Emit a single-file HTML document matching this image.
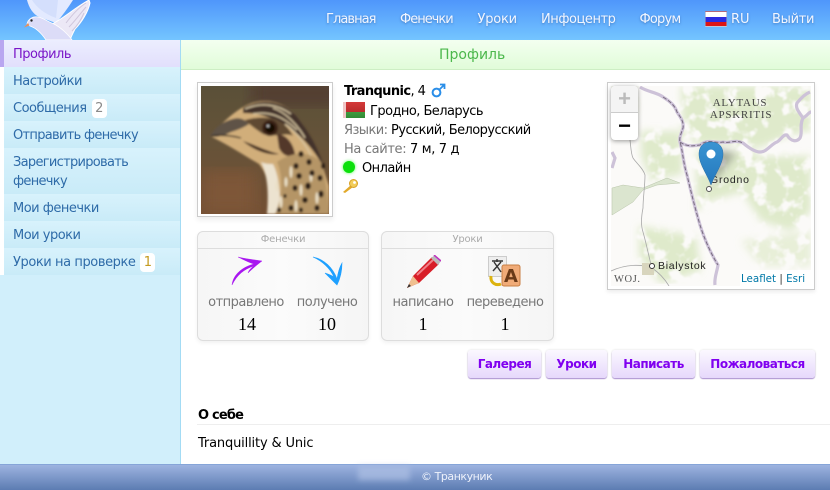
<!DOCTYPE html>
<html><head><meta charset="utf-8"><style>
*{box-sizing:border-box}
html,body{margin:0;padding:0}
body{width:830px;height:490px;position:relative;overflow:hidden;background:#fff;font:13px "DejaVu Sans",sans-serif;color:#000}
.a{position:absolute;white-space:nowrap;line-height:16px;letter-spacing:-.55px}
#hd{position:absolute;left:0;top:0;width:830px;height:40px;background:linear-gradient(#4f96fb,#74c5ff)}
.n{position:absolute;top:12px;color:#f2f6ff;line-height:16px;white-space:nowrap;text-shadow:0 1px 2px rgba(40,80,150,.5)}
#sb{position:absolute;left:0;top:40px;width:181px;height:424px;background:#d1effb;border-right:1px solid #a3dbf4}
.m{position:absolute;left:4px;width:176px;background:linear-gradient(#d8f2fc,#c9ebf8);color:#2e6ba8;padding:5px 9px;line-height:19px;letter-spacing:-.5px;white-space:nowrap}
.bd{display:inline-block;background:#fff;border-radius:4px;padding:0 3.5px;margin-left:1.500px;color:#8a8a8a;line-height:19px;letter-spacing:0}
.box{position:absolute;top:231px;height:110px;border:1px solid #ddd;border-radius:6px;background:linear-gradient(90deg,#f6f6f6,#fbfbfb 50%,#f5f5f5);box-shadow:0 2px 4px rgba(0,0,0,.06)}
.bt{position:absolute;left:0;right:0;top:0;height:17px;border-bottom:1px solid #ddd;text-align:center;font-size:10px;line-height:16px;color:#aaa;letter-spacing:-.2px}
.l{color:#777;position:absolute;text-align:center;white-space:nowrap;line-height:16px;letter-spacing:-.5px}
.v{position:absolute;text-align:center;font:18px "Liberation Serif",serif;line-height:18px;color:#000}
.b{position:absolute;top:350px;height:28px;border-radius:3px;background:linear-gradient(#fbf8ff,#e6d8fb);box-shadow:0 1px 1px #a98fd0,0 0 2px #ddd;color:#8000f0;font-weight:bold;font-size:12px;text-align:center;line-height:28px;letter-spacing:-.5px}
</style></head><body>
<div id="hd"></div>
<svg style="position:absolute;left:20px;top:0" width="80" height="40" viewBox="0 0 80 40">
<path d="M7 0 C9 8 13 14 19 17 L36 23 C42 16 48 8 53 0Z" fill="#e3eaff"/>
<path d="M12 0 C17 8 25 14 36 18 L38 0Z" fill="#cfdcfb" opacity=".8"/>
<path d="M30 25 C42 20 54 8 69 0 L70 3 C68 12 62 22 55 29 C53 33 51 37 50 40 L40 40Z" fill="#ece8f6" stroke="#fff" stroke-width="1"/>
<path d="M46 23 C52 15 58 8 66 3 M49 27 C55 21 60 14 66 7 M52 31 C57 26 61 20 64 13" stroke="#cfc6dc" fill="none"/>
<path d="M7 24 C8 19 13 16 18 17 C24 18 28 22 34 24 C40 27 48 34 52 40 L26 40 C22 34 16 28 10 26Z" fill="#dcdcf7" stroke="#fff" stroke-width=".8"/>
<path d="M4 27.500 L8 23 L9.500 25.500Z" fill="#e8915c"/><circle cx="11.500" cy="20.500" r="1.200" fill="#222"/>
</svg>
<div class="n" style="left:326px;letter-spacing:-.95px">Главная</div>
<div class="n" style="left:400px;letter-spacing:-1px">Фенечки</div>
<div class="n" style="left:477.500px;letter-spacing:-.2px">Уроки</div>
<div class="n" style="left:541px;letter-spacing:-.45px">Инфоцентр</div>
<div class="n" style="left:639.500px;letter-spacing:-.8px">Форум</div>
<div style="position:absolute;left:705px;top:11px;width:22px;height:16px;border-radius:1px;background:linear-gradient(#fff 0 5px,#2a2ae0 5px 10px,#dd1414 10px);border:1px solid rgba(150,160,190,.6)"></div>
<div class="n" style="left:731px">RU</div>
<div class="n" style="left:772px;letter-spacing:-.3px">Выйти</div>

<div id="sb"></div>
<div style="position:absolute;left:0;top:40px;width:4px;height:27px;background:#b9a6f0"></div>
<div class="m" style="top:40px;height:27px;background:linear-gradient(#eceeff,#e2dffc);color:#7a16c8">Профиль</div>
<div class="m" style="top:67px;height:27px">Настройки</div>
<div class="m" style="top:94px;height:27px">Сообщения <span class="bd">2</span></div>
<div class="m" style="top:121px;height:27px;letter-spacing:-.7px">Отправить фенечку</div>
<div class="m" style="top:148px;height:46px;letter-spacing:-.7px">Зарегистрировать<br>фенечку</div>
<div class="m" style="top:194px;height:27px">Мои фенечки</div>
<div class="m" style="top:221px;height:27px">Мои уроки</div>
<div class="m" style="top:248px;height:27px;letter-spacing:-.42px">Уроки на проверке <span class="bd" style="color:#c49a1e;margin-left:1px">1</span></div>
<div style="position:absolute;left:0;top:67px;width:4px;height:208px;background:#fff"></div>

<div style="position:absolute;left:181px;top:40px;width:649px;height:30px;background:linear-gradient(#f3fff0,#e1fcd9);border-bottom:1px solid #cdeec4"></div>
<div class="a" style="left:439px;top:47px;color:#4cb84c;font-size:14px;letter-spacing:0">Профиль</div>

<div style="position:absolute;left:197px;top:82px;width:136px;height:135px;border:1px solid #ccc;box-shadow:0 3px 5px rgba(0,0,0,.07)"></div>
<svg style="position:absolute;left:201px;top:86px" width="128" height="128" viewBox="0 0 128 128">
<defs>
<linearGradient id="bg" x1="0" y1="0" x2="0" y2="1"><stop offset="0" stop-color="#5a5038"/><stop offset=".45" stop-color="#665339"/><stop offset="1" stop-color="#734f33"/></linearGradient>
<filter id="bl"><feGaussianBlur stdDeviation="1"/></filter>
<filter id="bl3"><feGaussianBlur stdDeviation="8"/></filter>
</defs>
<rect width="128" height="128" fill="url(#bg)"/>
<rect x="50" y="-6" width="90" height="26" fill="#523d30" filter="url(#bl3)"/>
<rect x="0" y="85" width="55" height="43" fill="#7e5637" filter="url(#bl3)"/>
<g filter="url(#bl)">
<path d="M9 50 C20 38 32 26 46 19 C62 11 86 14 100 36 C114 56 123 84 128 100 L128 128 L66 128 C70 108 68 90 58 78 C44 70 26 58 9 50Z" fill="#d1ae7a"/>
<path d="M42 22 C60 11 86 14 100 36 C110 50 118 64 124 84 C112 60 92 40 72 33 C60 28 50 27 42 27Z" fill="#43332a"/>
<g stroke="#d9c7a3" stroke-width="1.400" fill="none"><path d="M44 23 C60 16 76 18 90 28"/><path d="M52 28 C68 25 82 30 96 44"/><path d="M72 22 C84 26 96 38 104 52"/><path d="M84 38 C96 46 106 60 112 74"/></g>
<path d="M9 50 C14 42 22 35 32 33 C38 31 44 33 48 38 C42 42 36 44 30 46 C22 50 14 52 9 50Z" fill="#5f5247"/>
<path d="M10 50 C22 48 32 50 40 52" stroke="#342b24" stroke-width="1.400" fill="none"/>
<path d="M44 34 C52 32 62 30 74 33 C82 36 88 42 92 50 C84 46 74 52 62 48 C56 44 50 40 44 34Z" fill="#5f4833"/>
<path d="M42 55 C52 58 62 64 78 68 C68 70 52 64 42 55Z" fill="#452f20"/>
<path d="M76 48 C84 48 92 56 94 68 C88 72 82 70 78 62Z" fill="#52392a"/>
<path d="M60 76 C66 88 68 104 66 128 L78 128 C80 108 78 90 72 78 C68 78 64 78 60 76Z" fill="#ece3d0"/>
<path d="M76 76 C90 66 108 64 120 76 C125 92 127 110 128 128 L74 128 C82 110 82 90 76 76Z" fill="#b59566"/>
<g fill="#eadfc6"><ellipse cx="76" cy="100" rx="1.500" ry="6"/><ellipse cx="80" cy="116" rx="1.500" ry="6"/><ellipse cx="90" cy="86" rx="1.500" ry="6"/><ellipse cx="100" cy="104" rx="1.500" ry="6"/><ellipse cx="110" cy="90" rx="1.500" ry="6"/><ellipse cx="116" cy="112" rx="1.500" ry="6"/><ellipse cx="95" cy="120" rx="1.500" ry="6"/><ellipse cx="85" cy="96" rx="1.500" ry="5"/></g>
<g fill="#2a1c12"><ellipse cx="100" cy="68" rx="2.600" ry="3"/><ellipse cx="108" cy="76" rx="2.600" ry="3"/><ellipse cx="95" cy="80" rx="2.600" ry="3"/><ellipse cx="111" cy="87" rx="2.600" ry="3"/><ellipse cx="98" cy="90" rx="2.800" ry="3"/><ellipse cx="107" cy="100" rx="2.800" ry="3.500"/><ellipse cx="94" cy="102" rx="2.500" ry="3"/><ellipse cx="119" cy="92" rx="2.500" ry="3"/><ellipse cx="104" cy="114" rx="2.800" ry="3"/><ellipse cx="120" cy="108" rx="2.600" ry="3.500"/><ellipse cx="90" cy="122" rx="2.600" ry="3"/><ellipse cx="78" cy="124" rx="2" ry="2.500"/><ellipse cx="116" cy="122" rx="2.600" ry="3"/><ellipse cx="84" cy="110" rx="1.600" ry="2"/><ellipse cx="122" cy="80" rx="2" ry="3"/><ellipse cx="100" cy="124" rx="2" ry="2.500"/></g>
<circle cx="69" cy="42" r="8" fill="#3a2416"/><circle cx="69" cy="42" r="5" fill="#160a05"/><circle cx="67" cy="40" r="1.200" fill="#ddd"/>
</g>
</svg>

<div class="a" style="left:344px;top:84px"><b style="letter-spacing:-.6px">Tranqunic</b>, 4</div>
<svg style="position:absolute;left:431px;top:83px" width="15" height="15" viewBox="0 0 15 15"><circle cx="5.500" cy="9.500" r="3.900" fill="none" stroke="#2a8ee8" stroke-width="2"/><path d="M8.500 6.500L13 2M9 1.500h4.500V6" fill="none" stroke="#2a8ee8" stroke-width="1.800"/></svg>
<div style="position:absolute;left:343px;top:102px;width:22px;height:16px;background:linear-gradient(#d43a3a,#b92c2c 10px,#3f9a3f 10px,#2f8a35)"><div style="position:absolute;left:0;top:0;width:3px;height:100%;background:#efc6c6"></div></div>
<div class="a" style="left:370px;top:104px">Гродно, Беларусь</div>
<div class="a" style="left:344px;top:123px;letter-spacing:-.57px"><span style="color:#777">Языки:</span> Русский, Белорусский</div>
<div class="a" style="left:344px;top:142px;letter-spacing:-.35px"><span style="color:#777">На сайте:</span> 7 м, 7 д</div>
<div style="position:absolute;left:343px;top:161px;width:12px;height:12px;border-radius:50%;background:#0be00b;box-shadow:0 0 3px #5f5"></div>
<div class="a" style="left:362px;top:161px">Онлайн</div>
<svg style="position:absolute;left:342px;top:178px" width="18" height="16" viewBox="0 0 18 16"><path d="M1 14L9 7L11 9L3 15Z" fill="#e2a92a"/><circle cx="11.500" cy="5.500" r="4" fill="#f2cd5a" stroke="#d9a228"/><circle cx="12.500" cy="4.500" r="1.400" fill="#fff"/></svg>

<div class="box" style="left:197px;width:172px"><div class="bt">Фенечки</div></div>
<svg style="position:absolute;left:230px;top:255px" width="34" height="32" viewBox="0 0 34 32"><path d="M2 30C3 20 12 12 24 9C20 8 14 5 8 2C16 4 26 5 32 6C28 9 22 14 18 18C19 15 21 13 24 11C14 14 7 20 2 30Z" fill="#a815f0" stroke="#a815f0" stroke-width=".4"/></svg>
<svg style="position:absolute;left:312px;top:255px" width="32" height="36" viewBox="0 0 32 36"><path d="M1 2C12 4 21 13 25 24C26 18 27 13 30 8C30 16 28 24 25 30C21 26 17 22 13 18C16 19 19 20 22 22C18 13 10 6 1 2Z" fill="#1ea0ff" stroke="#1ea0ff" stroke-width=".6"/></svg>
<div class="l" style="left:197px;width:98px;top:295px">отправлено</div>
<div class="l" style="left:290px;width:74px;top:295px">получено</div>
<div class="v" style="left:197px;width:100px;top:315px">14</div>
<div class="v" style="left:291px;width:72px;top:315px">10</div>

<div class="box" style="left:381px;width:173px"><div class="bt">Уроки</div></div>
<svg style="position:absolute;left:405px;top:255px" width="36" height="34" viewBox="0 0 36 34"><path d="M2 33L8 21L27 2L34 9L14 28Z" fill="#d81e28"/><path d="M8 21L14 28L2 33Z" fill="#f0c090"/><path d="M2 33L4 29L6 31Z" fill="#333"/><path d="M26 3L30 0L36 6L33 10Z" fill="#bbb"/><path d="M29 0L36 6" stroke="#c030c0" stroke-width="1.500"/><path d="M12 20L28 5" stroke="#f08088" stroke-width="2"/></svg>
<svg style="position:absolute;left:488px;top:256px" width="33" height="32" viewBox="0 0 33 32"><rect x="0.500" y="0.500" width="18" height="20" fill="#eee" stroke="#ccc"/><path d="M4 5h11M9 3v3M5 15l8-9M6 6l7 10" stroke="#333" fill="none" stroke-width="1.400"/><rect x="14" y="9" width="18" height="21" rx="2" fill="#f0ab78" stroke="#c97f45"/><text x="23" y="26" text-anchor="middle" font-family="DejaVu Sans" font-weight="bold" font-size="18" fill="#6a3a18">A</text><path d="M3 20C2 27 8 30 13 28" stroke="#dcb30f" stroke-width="3" fill="none"/></svg>
<div class="l" style="left:381px;width:84px;top:295px">написано</div>
<div class="l" style="left:463px;width:84px;top:295px">переведено</div>
<div class="v" style="left:381px;width:84px;top:315px">1</div>
<div class="v" style="left:463px;width:84px;top:315px">1</div>

<div style="position:absolute;left:607px;top:82px;width:208px;height:208px;border:1px solid #ccc;box-shadow:0 2px 4px rgba(0,0,0,.08)"></div>
<svg style="position:absolute;left:611px;top:86px" width="200" height="200" viewBox="0 0 200 200">
<defs><filter id="s"><feGaussianBlur stdDeviation="4"/></filter>
<filter id="soft"><feGaussianBlur stdDeviation="4"/></filter>
<filter id="mot" x="0" y="0" width="100%" height="100%"><feTurbulence type="fractalNoise" baseFrequency=".07" numOctaves="3" seed="4" result="n"/><feColorMatrix in="n" type="matrix" values="0 0 0 0 0 0 0 0 0 0 0 0 0 0 0 6 0 0 0 -2" result="m"/><feGaussianBlur in="m" stdDeviation=".6" result="mb"/><feComposite in="SourceGraphic" in2="mb" operator="in"/></filter>
<linearGradient id="pin" x1="0" y1="0" x2="0" y2="1"><stop offset="0" stop-color="#3a94d2"/><stop offset="1" stop-color="#2478bd"/></linearGradient></defs>
<rect width="200" height="200" fill="#fbfaf8"/>
<g filter="url(#mot)"><g fill="#dfeacb" filter="url(#soft)">
<path d="M70 0H200V45L176 50L148 62L115 58L88 58L72 50Z"/>
<path d="M30 45H70L72 88L40 95L30 70Z"/>
<path d="M85 65H145L135 105L100 115L85 125Z"/>
<path d="M135 70H200V125L180 145L150 135L130 105Z"/>
<path d="M28 140L85 150L90 185L50 198L28 170Z"/>
<path d="M0 0H24V25L0 35Z"/>
<path d="M130 155L200 145V180L150 180Z" opacity=".7"/>
</g></g>
<path d="M1 102L12 99L32 102L56 92L69 97L46 99L32 104L22 116L1 129Z" fill="#dbe5cf" stroke="#b9c5aa" stroke-width=".5"/>
<g fill="none" stroke="#cdc2d8" stroke-width="3.200">
<path d="M29 1C36 6 46 6 52 11C60 16 64 20 66 26C70 32 73 36 72 42C70 48 68 52 69 56C72 66 72 76 76 89C80 106 84 122 89 139C93 152 100 168 107 179C106 186 103 192 104 199"/>
<path d="M69 56C76 61 82 60 89 59C98 52 104 58 112 56C118 58 124 53 132 57C138 62 144 66 149 66C156 66 160 58 166 56C170 54 172 48 176 49C180 56 186 56 189 52C192 46 188 40 192 32C188 26 184 22 186 17C190 12 194 8 199 6"/>
<path d="M192 32C196 30 198 26 200 26"/>
<path d="M1 66L4 72L1 82"/>
</g>
<g fill="none" stroke="#6a5e70" stroke-width="1" stroke-dasharray="4 2" opacity=".85">
<path d="M52 11C60 16 64 20 66 26C70 32 73 36 72 42C70 48 68 52 69 56C72 66 72 76 76 89C80 106 84 122 89 139C93 152 100 168 107 179"/>
<path d="M69 56C76 61 82 60 89 59C98 52 104 58 112 56C118 58 124 53 132 57"/>
</g>
<path d="M19 54C20 62 20 68 22 72C26 78 32 82 34 89C34 100 32 112 32 122C30 132 30 140 32 146C36 160 38 172 41 182M0 185C15 178 30 178 41 182C50 188 55 195 58 200" fill="none" stroke="#a8a8a8" stroke-width=".8"/>
<rect x="31" y="177" width="12" height="12" fill="#d8d5bd"/>
<text x="129" y="20" text-anchor="middle" font-family="Liberation Serif" font-size="11" letter-spacing=".75" fill="#444">ALYTAUS</text>
<text x="130" y="32" text-anchor="middle" font-family="Liberation Serif" font-size="11" letter-spacing=".75" fill="#444">APSKRITIS</text>
<text x="3" y="196" font-family="Liberation Serif" font-size="10.500" letter-spacing=".6" fill="#555">WOJ.</text>
<text x="99" y="97" font-family="Liberation Sans" font-size="10.500" letter-spacing=".8" fill="#222">Grodno</text>
<text x="47" y="183" font-family="Liberation Sans" font-size="10.500" letter-spacing=".7" fill="#222">Bialystok</text>
<circle cx="98" cy="103" r="2.500" fill="#fff" stroke="#555"/>
<circle cx="41" cy="180" r="2.500" fill="#fff" stroke="#333"/>
<path d="M105 62L125 68L100 100Z" fill="#555" opacity=".4" filter="url(#s)"/>
<path d="M100 99C96 88 88 78 88 68C88 60 93 56 100 56C107 56 112 60 112 68C112 78 104 88 100 99Z" fill="url(#pin)" stroke="#2a6ea8" stroke-width=".5"/>
<circle cx="100" cy="68" r="4.500" fill="#fff"/>
<rect x="129" y="184" width="71" height="16" fill="#fff" opacity=".85"/>
<text x="130" y="196" font-family="DejaVu Sans" font-size="10.300" fill="#0078a8">Leaflet <tspan fill="#333">|</tspan> Esri</text>
</svg>
<div style="position:absolute;left:611px;top:86px;width:27px;height:54px;border-radius:4px;box-shadow:0 1px 5px rgba(0,0,0,.4);background:#fff">
<div style="height:27px;background:#f4f4f4;border-bottom:1px solid #ccc;border-radius:4px 4px 0 0;color:#bbb;text-align:center;font:bold 22px/26px 'Liberation Sans',sans-serif">+</div>
<div style="height:27px;color:#000;text-align:center;font:bold 22px/26px 'Liberation Sans',sans-serif">−</div>
</div>

<div class="b" style="left:468px;width:73px">Галерея</div>
<div class="b" style="left:546px;width:61px">Уроки</div>
<div class="b" style="left:612px;width:83px">Написать</div>
<div class="b" style="left:700px;width:115px">Пожаловаться</div>

<div class="a" style="left:198px;top:408px;font-weight:bold;letter-spacing:-.8px">О себе</div>
<div style="position:absolute;left:197px;top:424px;width:633px;height:1px;background:#eee"></div>
<div class="a" style="left:198px;top:436px;letter-spacing:-.15px">Tranquillity &amp; Unic</div>

<div style="position:absolute;left:0;top:464px;width:830px;height:26px;background:linear-gradient(#9db3e0,#5c7cb2);border-top:1px solid #86a5d8"></div>
<div style="position:absolute;left:358px;top:466px;width:52px;height:14px;background:#aec0e4;filter:blur(3px);opacity:.7"></div>
<div class="a" style="left:421px;top:469px;font-size:11px;color:#eef2fb;letter-spacing:-.45px">© Транкуник</div>
</body></html>
